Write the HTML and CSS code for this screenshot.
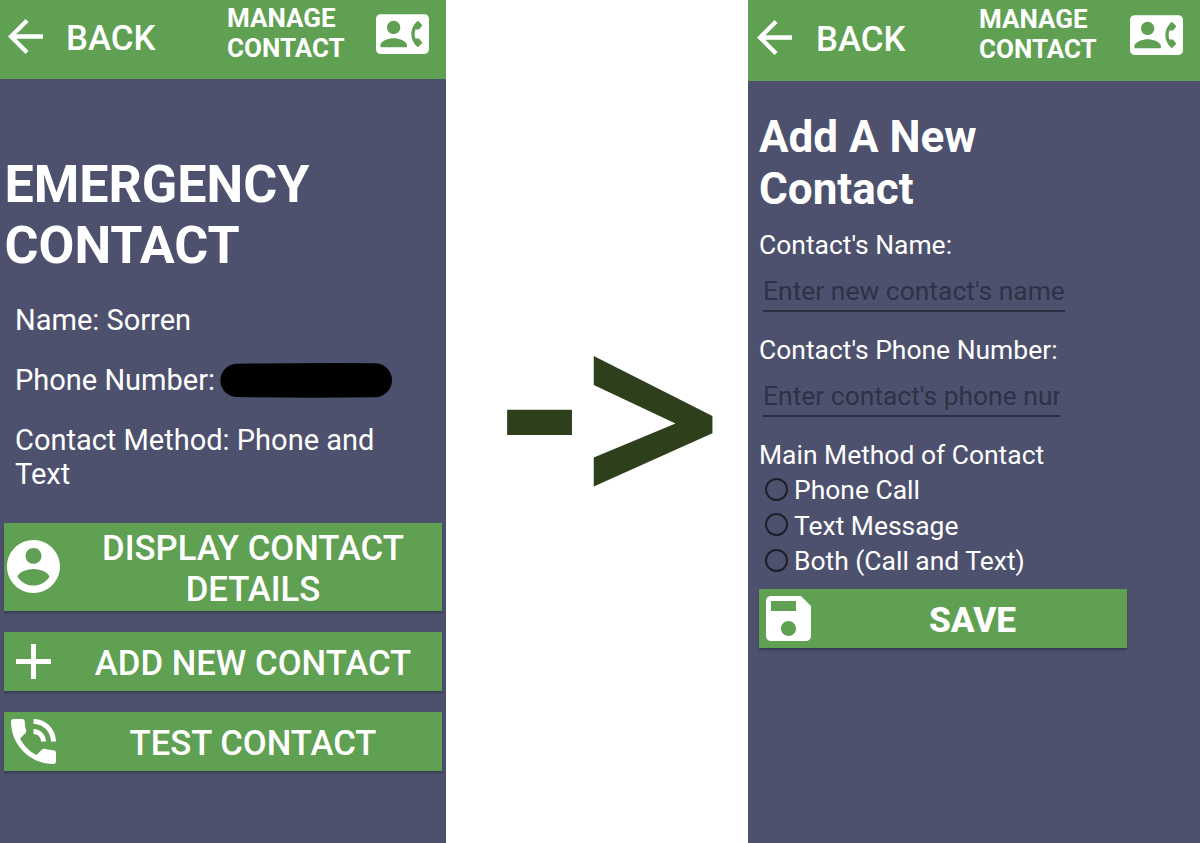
FILE: index.html
```html
<!DOCTYPE html>
<html lang="en">
<head>
<meta charset="utf-8">
<title>Manage Contact</title>
<link rel="stylesheet" href="styles.css">
</head>
<body>
<svg class="defs" width="0" height="0" aria-hidden="true">
  <symbol id="i-back" viewBox="4 4 16 16"><path d="M20 11H7.83l5.59-5.59L12 4l-8 8 8 8 1.41-1.41L7.83 13H20v-2z"/></symbol>
  <symbol id="i-card" viewBox="0 3 24 18"><path d="M22 3H2C.9 3 0 3.9 0 5v14c0 1.1.9 2 2 2h19.99c1.1 0 1.99-.9 1.99-2L24 5c0-1.1-.9-2-2-2zM8 6c1.66 0 3 1.34 3 3s-1.34 3-3 3-3-1.34-3-3 1.34-3 3-3zm6 12H2v-1c0-2 4-3.1 6-3.1s6 1.1 6 3.1v1zm3.85-4h1.64L21 16l-1.99 1.99c-1.31-.98-2.28-2.38-2.73-3.99-.18-.64-.28-1.31-.28-2s.1-1.36.28-2c.45-1.62 1.42-3.01 2.73-3.99L21 8l-1.51 2h-1.64c-.22.63-.35 1.3-.35 2s.13 1.37.35 2z"/></symbol>
</svg>
<main class="board">
  <section class="phone phone-left">
    <header class="bar">
      <svg class="back-icon"><use href="#i-back"/></svg>
      <span class="back">BACK</span>
      <span class="bar-title">MANAGE<br>CONTACT</span>
      <svg class="card-icon"><use href="#i-card"/></svg>
    </header>
    <h1 class="title">EMERGENCY<br>CONTACT</h1>
    <div class="details">
      <p>Name: Sorren</p>
      <p class="number">Phone Number:<svg class="redacted" viewBox="0 0 172 36"><path d="M17 1.8Q90 .7 155 1.2A17 17 0 0 1 155 35.2Q90 36.2 17 35.1A16.65 16.65 0 0 1 17 1.8z"/></svg></p>
      <p>Contact Method: Phone and Text</p>
    </div>
    <div class="actions">
      <button class="btn tall"><svg class="icon-user" viewBox="2 2 20 20"><path d="M12 2C6.48 2 2 6.48 2 12s4.48 10 10 10 10-4.48 10-10S17.52 2 12 2zm0 3c1.66 0 3 1.34 3 3s-1.34 3-3 3-3-1.34-3-3 1.34-3 3-3zm0 14.2c-2.5 0-4.71-1.28-6-3.22.03-1.99 4-3.08 6-3.08 1.99 0 5.97 1.09 6 3.08-1.29 1.94-3.5 3.22-6 3.22z"/></svg><span>DISPLAY CONTACT<br>DETAILS</span></button>
      <button class="btn"><svg class="icon-add" viewBox="5 5 14 14"><path d="M19 13h-6v6h-2v-6H5v-2h6V5h2v6h6v2z"/></svg><span>ADD NEW CONTACT</span></button>
      <button class="btn"><svg class="icon-call" viewBox="3 3 18 18"><path d="M20 15.5c-1.25 0-2.45-.2-3.57-.57-.35-.11-.74-.03-1.02.24l-2.2 2.2c-2.83-1.44-5.15-3.75-6.59-6.59l2.2-2.21c.28-.26.36-.65.25-1C8.7 6.45 8.5 5.25 8.5 4c0-.55-.45-1-1-1H4c-.55 0-1 .45-1 1 0 9.39 7.61 17 17 17 .55 0 1-.45 1-1v-3.5c0-.55-.45-1-1-1zM19 12h2c0-4.97-4.03-9-9-9v2c3.87 0 7 3.13 7 7zm-4 0h2c0-2.76-2.24-5-5-5v2c1.66 0 3 1.34 3 3z"/></svg><span>TEST CONTACT</span></button>
    </div>
  </section>
  <div class="arrow"><span class="dash">-</span><span class="head">&gt;</span></div>
  <section class="phone phone-right">
    <header class="bar">
      <svg class="back-icon"><use href="#i-back"/></svg>
      <span class="back">BACK</span>
      <span class="bar-title">MANAGE<br>CONTACT</span>
      <svg class="card-icon"><use href="#i-card"/></svg>
    </header>
    <form class="form">
      <h1 class="form-title">Add A New<br>Contact</h1>
      <label class="label">Contact's Name:</label>
      <div class="field name-field">Enter new contact's name</div>
      <label class="label">Contact's Phone Number:</label>
      <div class="field phone-field">Enter contact's phone number</div>
      <div class="label method">Main Method of Contact</div>
      <div class="option"><i class="radio"></i>Phone Call</div>
      <div class="option"><i class="radio"></i>Text Message</div>
      <div class="option"><i class="radio"></i>Both (Call and Text)</div>
      <button type="button" class="btn save"><svg class="icon-save" viewBox="3 3 18 18"><path d="M17 3H5c-1.11 0-2 .9-2 2v14c0 1.1.89 2 2 2h14c1.1 0 2-.9 2-2V7l-4-4zm-5 16c-1.66 0-3-1.34-3-3s1.34-3 3-3 3 1.34 3 3-1.34 3-3 3zm3-10H5V5h10v4z"/></svg><span>SAVE</span></button>
    </form>
  </section>
</main>
</body>
</html>
```
FILE: styles.css
```css
* { box-sizing: border-box; }
body { margin: 0; background: #fff; font-family: Roboto, sans-serif; color: #fff; overflow: hidden; }
h1, p { margin: 0; }
svg { fill: currentColor; flex: none; display: block; }
.defs { position: absolute; }
.board { display: grid; grid-template-columns: 446px 302px 452px; height: 843px; }
.phone { background: #4d516d; overflow: hidden; }
.bar { height: 79px; background: #5fa052; display: flex; align-items: flex-start; padding-left: 8px; }
.back-icon { width: 35px; height: 35px; margin-top: 19px; }
.back { font-size: 34.8px; line-height: 41px; font-weight: 500; margin: 18px 0 0 23px; width: 161px; }
.bar-title { font-size: 26px; line-height: 30px; font-weight: 700; margin-top: 3px; width: 149px; }
.card-icon { width: 53px; height: 40px; margin-top: 14px; }
.phone-right .bar { height: 81px; padding-left: 9px; padding-top: 1px; }
.phone-right .back { margin-left: 24px; }
.phone-right .bar-title { margin-left: 2px; width: 151px; }

.title { font-size: 52px; line-height: 61px; font-weight: 700; padding: 75px 0 0 4.5px; }
.details { padding: 27px 50px 0 15px; display: grid; gap: 26px; font-size: 29px; line-height: 34px; }
.number { display: flex; }
.redacted { width: 172px; height: 36px; margin: -1px 0 -1px 5px; fill: #000; overflow: visible; }

.actions { display: grid; gap: 21px; padding: 32px 4px 0; }
.btn { display: flex; align-items: center; height: 59px; width: 100%; padding: 0; border: 0; border-radius: 0; background: #5fa052; color: #fff; font: 500 34.7px/41px Roboto, sans-serif; box-shadow: 0 2px 2px #363b55; }
.btn span { flex: 1; text-align: center; padding: 4px 3px 0 0; }
.tall { height: 88px; }
.icon-user { width: 53px; height: 53px; margin: 0 7px 1px 3px; }
.icon-add { width: 35px; height: 35px; margin: 0 16px 0 12px; }
.icon-call { width: 45px; height: 45px; margin: 0 11px 1px 7px; }

.arrow { display: flex; align-items: flex-start; color: #2d401b; font: 700 240px/1 "Open Sans", sans-serif; padding: 276px 0 0 54px; }
.dash { transform: translate(1px, 2px) scale(1.03, .86); }
.head { transform: translate(7.5px, 19px) scale(1.02, 1.035); }

.form { padding: 30px 73px 0 11px; }
.form-title { font-size: 44px; line-height: 52px; font-weight: 700; margin-bottom: 14px; }
.label { display: block; font-size: 26.45px; line-height: 31px; }
.field { font-size: 26.45px; line-height: 31px; height: 37px; margin: 15px 0 22px 4px; color: #2f3246; border-bottom: 2px solid #2c2f42; white-space: nowrap; overflow: hidden; }
.name-field { width: 302px; }
.phone-field { width: 297px; }
.method { margin-bottom: 2px; }
.option { display: flex; align-items: center; gap: 7px; height: 35.5px; padding-left: 6px; font-size: 26.45px; line-height: 31px; }
.radio { width: 23px; height: 23px; border: 2px solid #1d1f2b; border-radius: 50%; margin: -1px -1px 0 0; }
.save { width: 368px; margin-top: 10px; font-size: 35.2px; font-weight: 800; }
.save span { padding-right: 0; }
.icon-save { width: 45px; height: 45px; margin: 0 7px; }
```
